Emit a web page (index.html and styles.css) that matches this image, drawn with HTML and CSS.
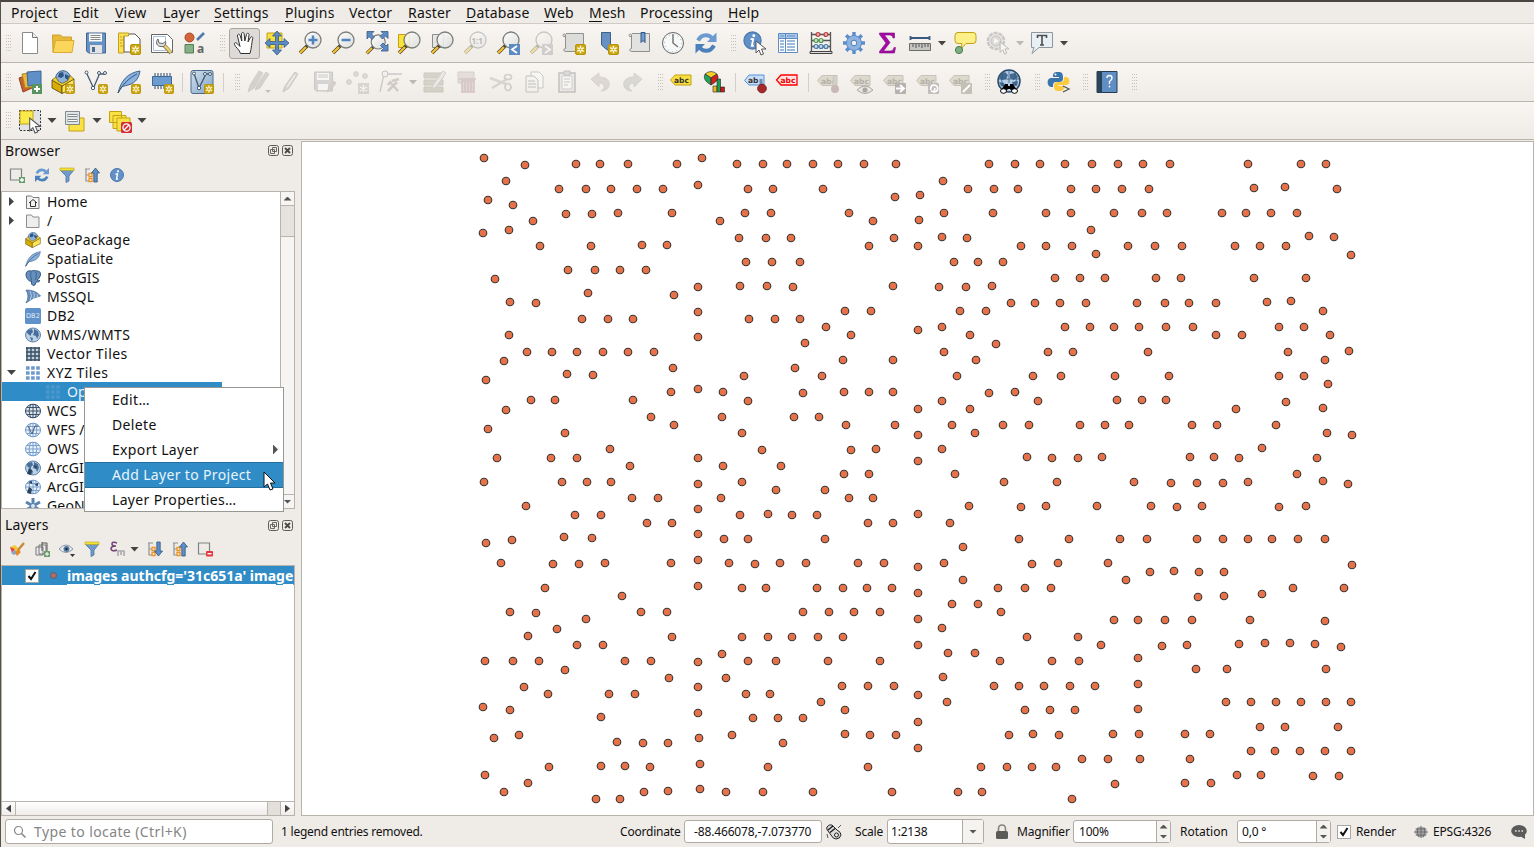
FILE: index.html
```html
<!DOCTYPE html>
<html lang="en">
<head>
<meta charset="utf-8">
<title>QGIS</title>
<link rel="stylesheet" href="styles.css">
</head>
<body>
<svg class="defs" width="0" height="0">
  <defs>
    <linearGradient id="glass" x1="0" y1="0" x2="1" y2="1"><stop offset="0" stop-color="#fff"/><stop offset="1" stop-color="#d9dbd8"/></linearGradient>
    <linearGradient id="blueglass" x1="0" y1="0" x2="1" y2="1"><stop offset="0" stop-color="#d4e1ee"/><stop offset="1" stop-color="#7fa3c8"/></linearGradient>
    <symbol id="star" viewBox="0 0 11 11"><rect x=".5" y=".5" width="10" height="10" rx="1.5" fill="#cba610" stroke="#b8940a"/><path d="M5.5 1.700v7.600M2.200 3.600l6.600 3.800M8.800 3.600L2.200 7.400" stroke="#fffbe6" stroke-width="1.500"/><circle cx="5.500" cy="5.500" r="1" fill="#cba610"/></symbol>
    <symbol id="lens" viewBox="0 0 24 24"><path d="M2 22l8-8" stroke="#3b3b33" stroke-width="3.600"/><path d="M2 22l6-6" stroke="#f5c02c" stroke-width="2.400"/><circle cx="15" cy="9" r="8" fill="url(#glass)" fill-opacity=".88" stroke="#7b7d7a" stroke-width="1.300"/></symbol>
    <symbol id="refresh" viewBox="0 0 24 24"><path d="M4 9.500Q7 4 12 4.200q4 .2 6 3" fill="none" stroke="#6b9bd2" stroke-width="4"/><path d="M22.500 1.500v9.500h-9.500z" fill="#6b9bd2"/><path d="M20 14.500Q17 20 12 19.800q-4-.2-6-3" fill="none" stroke="#4b80bd" stroke-width="4"/><path d="M1.500 22.500V13H11z" fill="#4b80bd"/></symbol>
    <symbol id="arrow" viewBox="0 0 12 16"><path d="M1 1v12l3-3 2 5 2.500-1-2-5H11z" fill="#fff" stroke="#555" stroke-width="1"/></symbol>
    <symbol id="info" viewBox="0 0 16 16"><circle cx="8" cy="8" r="6.500" fill="#6290c8" stroke="#4b78ae"/><circle cx="9" cy="4.300" r="1.100" fill="#fff"/><path d="M6.500 7h2l-1 5h1.500" fill="none" stroke="#fff" stroke-width="1.400"/></symbol>
    <symbol id="globe" viewBox="0 0 16 16"><ellipse cx="8" cy="8" rx="7.500" ry="7" fill="#bcd0e6" stroke="#5c83ad"/><path d="M3 3l4-1 1 3-2 2v2L3 7 1.500 5zM9 2l4 2 1 4-2 4-1-3-3-1 1-3zM5 10l3 1-1 4z" fill="#486f9c"/></symbol>
    <symbol id="gridglobe" viewBox="0 0 16 16"><ellipse cx="8" cy="8" rx="7.500" ry="6.800" fill="currentColor" fill-opacity=".15" stroke="currentColor"/><path d="M.5 8h15M2 4.500h12M2 11.500h12M8 1v14M5.500 1.500q-3 6.500 0 13M10.500 1.500q3 6.500 0 13" fill="none" stroke="currentColor" stroke-width=".9"/></symbol>
    <symbol id="box" viewBox="0 0 24 24"><circle cx="12" cy="8" r="7.300" fill="#8db2db" stroke="#3f668f"/><path d="M8 3l4-1 1 4-3 2-3-1zM14 4l4 2-1 4-3-2z" fill="#2e5584"/><path d="M1 10l10 6v7.500L1 18z" fill="#d9ad00" stroke="#4e4216" stroke-width=".8"/><path d="M23 9l-12 7v7.500l12-6z" fill="#ffe552" stroke="#4e4216" stroke-width=".8"/><path d="M1 10l4-3 2 4 4 2.500 6-3 2-5 4 3.500-12 7z" fill="#f2cf2b" stroke="#4e4216" stroke-width=".6"/></symbol>
    <symbol id="feather" viewBox="0 0 24 24"><path d="M1 23c3-12 9-20 22-22-1 5-3 12-12 14-3 1-6 1-7 3z" fill="#8bb2de" stroke="#3f6690"/><path d="M1 23C6 14 12 8 20 4" fill="none" stroke="#31577f"/></symbol>
    <symbol id="tiles" viewBox="0 0 16 16"><path d="M1 3h14M1 8h14M1 13h14" stroke="currentColor" stroke-width="3.600" stroke-dasharray="3.600 1.500"/></symbol>
    <symbol id="funnel" viewBox="0 0 16 16"><path d="M1 3h14L10 9v5l-3 1.500V9z" fill="#6f9bcb" stroke="#4b76a6" stroke-width=".8"/><path d="M1 1h14v2.500H1z" fill="#f4e13b" stroke="#b6a51e" stroke-width=".6"/></symbol>
    <symbol id="treeup" viewBox="0 0 16 16"><path d="M1 2h5M2 2v12h4M2 8h3" fill="none" stroke="#8e9394" stroke-width="1.200"/><path d="M5 6.500h3v3H5zM5 11.500h3v3H5z" fill="#fff" stroke="#ee9224" stroke-width="1.300"/><path d="M11.500 1l4 5h-2.300v9H9.800V6H7.500z" fill="#5d8fc9" stroke="#30557f" stroke-width=".8"/></symbol>
    <symbol id="treedown" viewBox="0 0 16 16"><path d="M1 2h5M2 2v12h4M2 8h3" fill="none" stroke="#8e9394" stroke-width="1.200"/><path d="M5 6.500h3v3H5zM5 11.500h3v3H5z" fill="#fff" stroke="#ee9224" stroke-width="1.300"/><path d="M11.500 15l4-5h-2.300V1H9.800v9H7.500z" fill="#5d8fc9" stroke="#30557f" stroke-width=".8"/></symbol>
    <symbol id="float" viewBox="0 0 11 11"><rect x=".5" y=".5" width="10" height="10" rx="2" fill="none" stroke="#5e5b57"/><path d="M4.500 2.500h4v4h-4zM2.500 4.500h4v4h-4z" fill="#efebe7" stroke="#5e5b57" stroke-width=".9"/></symbol>
    <symbol id="close" viewBox="0 0 11 11"><rect x=".5" y=".5" width="10" height="10" rx="2" fill="none" stroke="#5e5b57"/><path d="M3 3l5 5M8 3L3 8" stroke="#4c4945" stroke-width="1.800"/></symbol>
    <symbol id="tag" viewBox="0 0 24 24"><path d="M1.500 11l4.500-5h16v10H6z" fill="#f8df3d" stroke="#c3a014"/><text x="5" y="14" class="tagtext" fill="#333">abc</text></symbol>
    <symbol id="graytag" viewBox="0 0 24 24"><path d="M1.500 10.500l4.500-5h15v10H6z" fill="#dddacd" stroke="#c6c3b8"/><text x="5" y="13.500" class="tagtext" fill="#b3b0a8">abc</text></symbol>
  </defs>
</svg>

<div class="window">
  <nav class="menubar">
    <span>Pro<u>j</u>ect</span><span><u>E</u>dit</span><span><u>V</u>iew</span><span><u>L</u>ayer</span><span><u>S</u>ettings</span><span><u>P</u>lugins</span><span>Vect<u>o</u>r</span><span><u>R</u>aster</span><span><u>D</u>atabase</span><span><u>W</u>eb</span><span><u>M</u>esh</span><span>Pro<u>c</u>essing</span><span><u>H</u>elp</span>
  </nav>

  <div class="toolbar">
    <i class="grip first"></i>
    <b class="tool"><svg viewBox="0 0 24 24"><path d="M4.500 1.500h10l5 5v16h-15z" fill="#fff" stroke="#8b8b89"/><path d="M14.500 1.500v5h5" fill="#eee" stroke="#777"/></svg></b>
    <b class="tool"><svg viewBox="0 0 24 24"><path d="M1.500 4h8l2 2h9v4H5L2 21z" fill="#e9b93a" stroke="#d0a02a"/><path d="M4.500 9.500h18.500l-2 12H2z" fill="#fbd65b" stroke="#d9aa37"/></svg></b>
    <b class="tool"><svg viewBox="0 0 24 24"><path d="M2.500 2h19v20h-17l-2-2z" fill="#6691c5" stroke="#44668f"/><path d="M5 2.500h13v8H5z" fill="#fafafa"/><path d="M6.500 4.500h10M6.500 6.500h10M6.500 8.500h10" stroke="#888"/><path d="M6 14h12v8H6z" fill="#e3e3e3"/><path d="M8 16h3v5H8z" fill="#4a6c96"/></svg></b>
    <b class="tool"><svg viewBox="0 0 24 24"><path d="M7 3h11l5 5v13H7z" fill="#fff" stroke="#555"/><path d="M1.500 2h10v3h-5v17h-5z" fill="#fbe05b" stroke="#c5a013"/><path d="M3 6h2M3 9h3M3 12h2M3 15h3" stroke="#c5a013"/><use href="#star" x="13" y="13" width="11" height="11"/></svg></b>
    <b class="tool"><svg viewBox="0 0 24 24"><path d="M1.500 3.500h16l5 5v13h-21z" fill="#fff" stroke="#666"/><path d="M3.500 5.500h12v14h-12z" fill="none" stroke="#a9bede"/><path d="M13 13l8 9" stroke="#8a7c3d" stroke-width="4"/><path d="M13 13l8 8.500" stroke="#e9d37a" stroke-width="2.500"/><path d="M8 8l1 4 4 .5 2.500-2c1 3-1.500 6-4.500 5-4 0-6-4-3-7.500z" fill="#ddd" stroke="#555" stroke-width=".9"/></svg></b>
    <b class="tool"><svg viewBox="0 0 24 24"><circle cx="6.500" cy="6.500" r="4.500" fill="#d3643b" stroke="#a44a27"/><path d="M14 9l7-7" stroke="#4f7bb0" stroke-width="2.600"/><path d="M2 13.500h8.500v8.500H2z" fill="#86b086" stroke="#577d58"/><text x="14" y="22" class="glyph-a">a</text></svg></b>
    <i class="grip"></i>
    <b class="tool pressed"><svg viewBox="0 0 24 24"><path d="M8.500 22.500c-1-4-5-6-6-9-.5-2 1.500-2.500 3-.5L8 15.500 5.500 5c-.4-2 2-2.500 2.600-.5L9.800 10 9.500 3c0-2 2.500-2 2.700 0l.6 7L14.500 3.500c.5-2 2.800-1.500 2.500.5L16 11l2.500-4.500c1-1.500 2.800-.5 2.200 1-1 4-1.200 10-2.700 15z" fill="#fff" stroke="#333"/></svg></b>
    <b class="tool"><svg viewBox="0 0 24 24"><path d="M2 2h15v15H2z" fill="#f9df3d" stroke="#c3a014"/><path d="M12 0l4.500 5H13.500v5.500h5.500V7.500L24 12l-5 4.500v-3h-5.500V19h3L12 24l-4.500-5h3v-5.500H5v3L0 12l5-4.500v3h5.500V5h-3z" fill="#5b8bc2" stroke="#365c87" stroke-width=".8"/></svg></b>
    <b class="tool"><svg viewBox="0 0 24 24"><use href="#lens"/><path d="M15 4.500v9M10.500 9h9" stroke="#4f82be" stroke-width="2.500"/></svg></b>
    <b class="tool"><svg viewBox="0 0 24 24"><use href="#lens"/><path d="M10.500 9h9" stroke="#4f82be" stroke-width="2.500"/></svg></b>
    <b class="tool"><svg viewBox="0 0 24 24"><g transform="translate(1 3) scale(.88)"><use href="#lens" width="24" height="24"/></g><path d="M3 .5h7L7.500 3l3 3-2.500 2.500-3-3L3 8zM24 .5v7L21.500 5l-3 3L16 5.500l3-3L17 .5zM24 20h-7l2.500-2.500-3-3L19 12l3 3 2-2z" fill="#5b8bc2" stroke="#365c87" stroke-width=".8"/></svg></b>
    <b class="tool"><svg viewBox="0 0 24 24"><path d="M1.500 3.500h11v13h-11z" fill="#fbe43a" stroke="#c3a014"/><use href="#lens"/></svg></b>
    <b class="tool"><svg viewBox="0 0 24 24"><path d="M2.500 3.500h11v13h-11z" fill="#e6e6e4" stroke="#8b8d8b"/><use href="#lens"/></svg></b>
    <b class="tool off"><svg viewBox="0 0 24 24"><use href="#lens"/><text x="8.500" y="12.500" class="one">1:1</text></svg></b>
    <b class="tool"><svg viewBox="0 0 24 24"><use href="#lens"/><path d="M13 13h11v11H13z" fill="#5b8bc2"/><path d="M21 15l-5 3.500 5 3.500" fill="none" stroke="#fff" stroke-width="1.800"/></svg></b>
    <b class="tool off"><svg viewBox="0 0 24 24"><use href="#lens"/><path d="M13 13h11v11H13z" fill="#999"/><path d="M16 15l5 3.500-5 3.500" fill="none" stroke="#fff" stroke-width="1.800"/></svg></b>
    <b class="tool"><svg viewBox="0 0 24 24"><path d="M4 2.500h17.500v18H4c-3 0-3-3-.5-3V3.500c-2-2-3 1-2 2h2" fill="#dcdcda" stroke="#90918f"/><use href="#star" x="13" y="13" width="11" height="11"/></svg></b>
    <b class="tool"><svg viewBox="0 0 24 24"><path d="M6.500 1.500h9v19L11 18l-4.500-4z" fill="#668fc2" stroke="#405f85"/><use href="#star" x="13" y="13" width="11" height="11"/></svg></b>
    <b class="tool"><svg viewBox="0 0 24 24"><path d="M4 2.500h17.500v18H4c-3 0-3-3-.5-3V3.500c-2-2-3 1-2 2h2" fill="#e2e2e0" stroke="#90918f"/><path d="M13 1.500h4v10l-2-2-2 2z" fill="#6f9bd0" stroke="#30557f"/></svg></b>
    <b class="tool"><svg viewBox="0 0 24 24"><circle cx="12" cy="12" r="10.500" fill="#f7f8f8" stroke="#666"/><path d="M12 3v9l5 4" fill="none" stroke="#777" stroke-width="1.500"/><circle cx="12" cy="12" r="8.500" fill="none" stroke="#9aabbc" stroke-dasharray="1 3.450"/></svg></b>
    <b class="tool"><svg viewBox="0 0 24 24"><use href="#refresh"/></svg></b>
    <i class="grip"></i>
    <b class="tool"><svg viewBox="0 0 24 24"><use href="#info" x="-1" y="-1" width="21" height="21"/><use href="#arrow" x="12" y="9" width="12" height="16"/></svg></b>
    <b class="tool"><svg viewBox="0 0 24 24"><path d="M2.500 2.500h19v19h-19z" fill="#fff" stroke="#5e8cc0"/><path d="M3 3h18v4H3z" fill="#a9c7e8"/><path d="M3 7.500h18M9.500 3v18" stroke="#5e8cc0"/><path d="M4 5h4M11 5h8M4 10h4M11 10h8M4 13h4M11 13h8M4 16h4M11 16h8M4 19h4M11 19h8" stroke="#7da3cf" stroke-width="1.300"/></svg></b>
    <b class="tool"><svg viewBox="0 0 24 24"><path d="M2.500 1v21M21.500 1v21M2 3.500h20M2 9.500h20M2 15.500h20" fill="none" stroke="#555" stroke-width="1.300"/><path d="M1 20.500h22v2H1z" fill="#ddd" stroke="#444"/><g stroke-width="1.200"><g fill="#f3a8a8" stroke="#b13c3c"><circle cx="9" cy="3.500" r="2"/><circle cx="17" cy="3.500" r="2"/></g><g fill="#c3e6c3" stroke="#56975a"><circle cx="7" cy="9.500" r="2"/><circle cx="12" cy="9.500" r="2"/></g><g fill="#c5dcf1" stroke="#4a7aa8"><circle cx="7" cy="15.500" r="2"/><circle cx="12" cy="15.500" r="2"/><circle cx="17" cy="15.500" r="2"/></g></g></svg></b>
    <b class="tool"><svg viewBox="0 0 24 24"><path d="M12 1v22M1 12h22M4.200 4.200l15.600 15.600M19.800 4.200L4.200 19.800" stroke="#5b8dca" stroke-width="3.400"/><circle cx="12" cy="12" r="7.500" fill="#8fb3e0" stroke="#5b8dca"/><circle cx="12" cy="12" r="2.800" fill="#f1f2f2" stroke="#4b7db9"/></svg></b>
    <b class="tool"><svg viewBox="0 0 24 24"><path d="M4.500 2h15v5h-1.500q-.5-3-3-3H9.500l5.500 7.500-6.500 8.500h7q3 0 3.500-3.500H20.500L19.500 22H4.500v-1.500l6.500-8.500-6.500-8.500z" fill="#a50ca5" stroke="#7f087f" stroke-width=".6"/></svg></b>
    <b class="tool"><svg viewBox="0 0 24 24"><path d="M2 7h20M2.500 5v4M21.500 5v4" stroke="#39597f" stroke-width="1.800"/><path d="M1.500 12.500h21v7h-21z" fill="#c5c5c2" stroke="#6d6d6a"/><path d="M5 13v3M8 13v4M11 13v3M14 13v4M17 13v3M20 13v3" stroke="#555"/></svg></b>
    <i class="drop"></i>
    <b class="tool"><svg viewBox="0 0 24 24"><path d="M4 1.500h16q3 0 3 3v5q0 3-3 3h-7L8 18l1-5.500H5q-3 0-3-3v-5q0-3 3-3z" fill="#fdf089" stroke="#c3a014"/><circle cx="6" cy="19" r="3.600" fill="#7cae80" stroke="#4b7a50"/></svg></b>
    <b class="tool off"><svg viewBox="0 0 24 24"><circle cx="10" cy="10" r="8" fill="#ddd" stroke="#888" stroke-width="2.600" stroke-dasharray="4 1"/><circle cx="10" cy="10" r="5" fill="#bbb" stroke="#777"/><path d="M8 7l5 3-5 3z" fill="#fff"/><use href="#arrow" x="13" y="10" width="11" height="14"/></svg></b>
    <i class="drop dim"></i>
    <b class="tool"><svg viewBox="0 0 24 24"><path d="M1.500 1.500h21v15H9l-7 6 2-6H1.500z" fill="#e9f0f5" stroke="#8f979c"/><path d="M7.500 7V4.500h9V7M12 4.500V14M10 14h4" fill="none" stroke="#4d4d4d" stroke-width="1.600"/></svg></b>
    <i class="drop"></i>
  </div>

  <div class="toolbar">
    <i class="grip first"></i>
    <b class="tool"><svg viewBox="0 0 24 24"><path d="M1 8l9-3 4 13-9 4z" fill="#c9602f" stroke="#8f421d"/><path d="M4 4l10-1 2 14-9 1z" fill="#e7b93c" stroke="#b0841a"/><path d="M9 2l14-1v14l-13 1z" fill="#5f8fc9" stroke="#3d6691"/><path d="M14 14h10v10H14z" fill="#59935f"/><path d="M19 16v6M16 19h6" stroke="#fff" stroke-width="2"/></svg></b>
    <b class="tool"><svg viewBox="0 0 24 24"><use href="#box"/><use href="#star" x="14" y="14" width="10" height="10"/></svg></b>
    <b class="tool"><svg viewBox="0 0 24 24"><path d="M2.500 3l7 15 6-14h6" fill="none" stroke="#425a70" stroke-width="1.300"/><g fill="#fff" stroke="#425a70"><circle cx="2.500" cy="2.500" r="1.500"/><circle cx="9" cy="18" r="1.700"/><circle cx="15" cy="3" r="1.500"/><circle cx="21" cy="3" r="1.500"/></g><use href="#star" x="14" y="14" width="10" height="10"/></svg></b>
    <b class="tool"><svg viewBox="0 0 24 24"><use href="#feather"/><use href="#star" x="14" y="14" width="10" height="10"/></svg></b>
    <b class="tool"><svg viewBox="0 0 24 24"><path d="M5 3v16M8 3v16M11 3v16M14 3v16M17 3v16M20 3v16" stroke="#4b657f" stroke-width="1.200"/><path d="M2.500 6.500h19v9h-19z" fill="#6b9bd0" stroke="#3f6893"/><use href="#star" x="14" y="14" width="10" height="10"/></svg></b>
    <i class="sep"></i>
    <b class="tool"><svg viewBox="0 0 24 24"><rect x="1" y=".500" width="22" height="23" rx="2" fill="url(#blueglass)" stroke="#4c6c8e"/><path d="M4 3.500l5 14.500 7-14h5" fill="none" stroke="#425a70" stroke-width="1.300"/><g fill="#fff" stroke="#425a70"><circle cx="4" cy="3.500" r="1.500"/><circle cx="9" cy="18" r="1.700"/><circle cx="15" cy="4" r="1.500"/><circle cx="20" cy="4" r="1.500"/></g><use href="#star" x="14" y="14" width="10" height="10"/></svg></b>
    <i class="sep s2"></i>
    <i class="grip"></i>
    <b class="tool off"><svg viewBox="0 0 24 24"><path d="M1 22l2-7L12 1l4 2-9 15zM8 20l2-5 9-13 3 2-9 14z" fill="#a49c96" stroke="#999"/><path d="M18 20h6l-3 3z" fill="#777"/></svg></b>
    <b class="tool off"><svg viewBox="0 0 24 24"><path d="M3 22l2-6L15 2l3 2-9 14z" fill="#b5b2a5" stroke="#85837b"/><path d="M7 17l8-12" stroke="#fff"/></svg></b>
    <b class="tool off"><svg viewBox="0 0 24 24"><path d="M1.500 2h18v19H3l-1.500-2z" fill="#aaa" stroke="#888"/><path d="M4 3h12v7H4zM5 14h10v6H5z" fill="#fff"/><path d="M5 5h10M5 7h10" stroke="#888"/><path d="M14 22l2-5 5-6 2 2-6 8z" fill="#b5938d" stroke="#999"/></svg></b>
    <b class="tool off"><svg viewBox="0 0 24 24"><g fill="#bbb" stroke="#888"><circle cx="3" cy="12" r="2.300"/><circle cx="10" cy="4" r="2.300"/><circle cx="19" cy="6" r="2.300"/></g><path d="M12 13h11v11H12z" fill="#aaa"/><path d="M17.500 15v7M14 17l7 4M21 17l-7 4" stroke="#fff" stroke-width="1.300"/></svg></b>
    <b class="tool off"><svg viewBox="0 0 24 24"><path d="M1 22L5 4h18" fill="none" stroke="#888" stroke-width="1.300"/><circle cx="6" cy="4" r="3" fill="#eee" stroke="#777"/><path d="M9 21l9-9M11 12l8 9M13 11l7-2M9 15l3-4" stroke="#999284" stroke-width="2.500"/></svg></b>
    <i class="drop dim"></i>
    <b class="tool off"><svg viewBox="0 0 24 24"><path d="M1 3h19v5H1zM1 10h19v5H1zM1 17h19v5H1z" fill="#a5a38c" stroke="#8b8978"/><path d="M9 19l1-4L20 1l3 2-10 14z" fill="#ddd" stroke="#999"/></svg></b>
    <b class="tool off"><svg viewBox="0 0 24 24"><path d="M2 2h16v11H2z" fill="#ccbcb7" stroke="#999"/><path d="M3 9h17M6 11h12v11H6z" fill="#cbb0b0" stroke="#a37d7d" stroke-width="1.500"/><path d="M9 12v9M12 12v9M15 12v9" stroke="#8f6d6d"/></svg></b>
    <b class="tool off"><svg viewBox="0 0 24 24"><path d="M1 8l16 6M3 18l15-9" stroke="#aaa" stroke-width="2.500"/><g fill="none" stroke="#999" stroke-width="1.700"><ellipse cx="19" cy="7" rx="3.500" ry="2.500"/><ellipse cx="19" cy="17" rx="3" ry="3.500"/></g></svg></b>
    <b class="tool off"><svg viewBox="0 0 24 24"><path d="M9 2h8l4 4v12H9z" fill="#fff" stroke="#888"/><path d="M4 6h8l4 4v12H4z" fill="#f4f4f2" stroke="#777"/><path d="M6 11h7M6 14h8M6 17h8" stroke="#777"/></svg></b>
    <b class="tool off"><svg viewBox="0 0 24 24"><path d="M4 3h16v19H4z" fill="#ddd" stroke="#777" stroke-width="1.500"/><path d="M7 6h10v13H7z" fill="#fff" stroke="#999"/><path d="M9 1h6v4H9z" fill="#bbb" stroke="#777"/><path d="M9 9h6M9 12h6M9 15h4" stroke="#888"/></svg></b>
    <b class="tool off"><svg viewBox="0 0 24 24"><path d="M3 9l8-6v4c9 0 11 5 10 9-1 3-4 5-8 5 4-2 5-8-2-8v4z" fill="#b8b0a9" stroke="#aaa19a"/></svg></b>
    <b class="tool off"><svg viewBox="0 0 24 24"><path d="M21 9l-8-6v4C4 7 2 12 3 16c1 3 4 5 8 5-4-2-5-8 2-8v4z" fill="#aeb2aa" stroke="#9fa49b"/></svg></b>
    <i class="grip"></i>
    <b class="tool"><svg viewBox="0 0 24 24"><use href="#tag" x="-1" y="-1" width="24" height="24"/></svg></b>
    <b class="tool"><svg viewBox="0 0 24 24"><g stroke="#222" stroke-width=".6"><path d="M8 8L2 4q6-5 12 0z" fill="#f6cc29"/><path d="M8 8L2 4q-3 6 6 11z" fill="#21a453"/><path d="M8 8l6-4q4 6-6 11z" fill="#d32020"/><path d="M10 16h4v6h-4z" fill="#f4b61b"/><path d="M14 9h3.500v13H14z" fill="#1d9c50"/><path d="M17.500 17h4v5h-4z" fill="#cf1919"/></g></svg></b>
    <i class="sep"></i>
    <b class="tool"><svg viewBox="0 0 24 24"><path d="M1.500 10.500L6 5h15v10H6z" fill="#c8def7" stroke="#4e93df"/><text x="5" y="13" class="tagtext" fill="#333">ab</text><path d="M18 9v8" stroke="#718da8" stroke-width="3"/><circle cx="19" cy="18.500" r="4.300" fill="#a8292b" stroke="#771b1d"/></svg></b>
    <b class="tool"><svg viewBox="0 0 24 24"><path d="M.500 10L5 5h16v10H5z" fill="#ffe3e3" stroke="#f00" stroke-width="1.300"/><text x="4.500" y="13" class="tagtext" fill="#e00">abc</text></svg></b>
    <i class="sep"></i>
    <b class="tool"><svg viewBox="0 0 24 24"><use href="#graytag"/><path d="M18 6v10" stroke="#d0cbc6" stroke-width="3"/><circle cx="19" cy="19" r="4" fill="#c8b9b6"/></svg></b>
    <b class="tool"><svg viewBox="0 0 24 24"><use href="#graytag"/><path d="M8 20q8-8 16 0-8 7-16 0z" fill="#e9e7e3" stroke="#aaa7a1"/><circle cx="16" cy="20" r="2.500" fill="#aaa7a1"/></svg></b>
    <b class="tool"><svg viewBox="0 0 24 24"><use href="#graytag"/><rect x="13" y="13" width="11" height="11" rx="1" fill="#b4b2ae"/><path d="M14 18.500h7M18 15l4 3.500-4 3.500" fill="none" stroke="#fff" stroke-width="2"/></svg></b>
    <b class="tool"><svg viewBox="0 0 24 24"><use href="#graytag"/><rect x="13" y="13" width="11" height="11" rx="1" fill="#c0beba"/><path d="M16 20a3.500 3.500 0 1 1 3 2M20 18l-1 4-3-1" fill="none" stroke="#fff" stroke-width="1.700"/></svg></b>
    <b class="tool"><svg viewBox="0 0 24 24"><use href="#graytag"/><rect x="13" y="13" width="11" height="11" rx="1" fill="#c3c0b6"/><path d="M15 22l7-7" stroke="#fff" stroke-width="2"/></svg></b>
    <i class="grip"></i>
    <b class="tool"><svg viewBox="0 0 24 24"><circle cx="12" cy="11" r="11" fill="#b4cce6" stroke="#284a6c" stroke-width="1.500"/><path d="M3 5l5-3 3 3-2 4-4 1-3-2zM13 4l5-1 3 4-4 3-4-2zM2 12l5 1 1 4-4-1zM15 12l6-1-1 5-4-1z" fill="#42698f"/><path d="M1.500 9h21M12 0v13M6 2q-3 8 0 14M18 2q3 8 0 14" fill="none" stroke="#36597d" stroke-width=".8"/><path d="M4 20l4-6h3v2h2v-2h3l4 6-3 3-4-4h-2l-4 4z" fill="#000"/><ellipse cx="6.500" cy="21" rx="3" ry="2.300" fill="#fff" stroke="#000"/><ellipse cx="17.500" cy="21" rx="3" ry="2.300" fill="#fff" stroke="#000"/></svg></b>
    <i class="grip wide"></i>
    <b class="tool"><svg viewBox="0 0 24 24"><path d="M11 2c-5 0-5 2-5 5h6v1H4c-5 0-4 9 0 9h2c0-5 1-5 5-5 4 0 5-1 5-4 0-5-1-6-5-6z" fill="#3b75a9"/><path d="M12 21c5 0 5-2 5-5h-6v-1h8c5 0 4-8 0-8h-2c0 5-1 5-5 5-4 0-5 1-5 4 0 4 1 5 5 5z" fill="#fdcb3d"/><circle cx="8.500" cy="4.500" r="1" fill="#fff"/><path d="M16 16l6 3-6 3" fill="none" stroke="#555" stroke-width="1.300"/></svg></b>
    <i class="grip narrow"></i>
    <b class="tool"><svg viewBox="0 0 24 24"><path d="M2 1.500h20v21H2z" fill="#5f8ec4" stroke="#263d50"/><path d="M2 1.500h5v21H2z" fill="#2b4356"/><path d="M12 8q0-2.500 2.500-2.500T17 8q0 2-2.500 3.500V14" fill="none" stroke="#fff" stroke-width="1.400"/><circle cx="14.500" cy="16.500" r=".9" fill="#fff"/></svg></b>
    <i class="grip"></i>
  </div>

  <div class="toolbar last">
    <i class="grip first"></i>
    <b class="tool"><svg viewBox="0 0 24 24"><path d="M1.500 1.500h21v20h-21z" fill="#dfe3e6" stroke="#333" stroke-dasharray="2 1.500"/><path d="M2 2h13v13H2z" fill="#fce94a" stroke="#c3a014"/><g transform="translate(10 8)"><use href="#arrow" width="14" height="17"/></g></svg></b><i class="drop"></i>
    <b class="tool"><svg viewBox="0 0 24 24"><path d="M6 9h15v13H6z" fill="#fbe244" stroke="#c3a014"/><path d="M2.500 2.500h14v13h-14z" fill="#dfe4e8" stroke="#84898c"/><path d="M4.500 6.500h10M4.500 11.500h10" stroke="#84898c" stroke-width="3"/><path d="M5 6.500h9M5 11.500h9" stroke="#fff" stroke-width="1.200"/></svg></b><i class="drop"></i>
    <b class="tool"><svg viewBox="0 0 24 24"><path d="M1.500 2.500h12v11h-12zM5 6.500h13v13H5z" fill="#fbe244" stroke="#c3a014"/><path d="M9 9h13v13H9z" fill="#fbe244" stroke="#c3a014"/><rect x="13" y="13" width="11" height="11" rx="1.500" fill="#d32d35"/><circle cx="18.500" cy="18.500" r="3.600" fill="none" stroke="#fff" stroke-width="1.300"/><path d="M16 21l5-5" stroke="#fff" stroke-width="1.300"/></svg></b><i class="drop"></i>
  </div>

  <main class="workspace">
    <aside class="docks">
      <header class="dock-title"><span>Browser</span><svg><use href="#float"/></svg><svg><use href="#close"/></svg></header>
      <div class="dock-tools">
        <svg viewBox="0 0 16 16"><path d="M1.500 2h11v11h-11z" fill="none" stroke="#7e8584" stroke-width="1.200"/><path d="M10 10h6v6h-6z" fill="#6a9c6c"/><path d="M13 11v4M11 13h4" stroke="#fff" stroke-width="1.300"/></svg>
        <svg><use href="#refresh"/></svg><svg><use href="#funnel"/></svg><svg><use href="#treeup"/></svg><svg><use href="#info"/></svg>
      </div>
      <section class="browser-tree">
        <ul class="tree">
          <li><i class="exp"></i><svg viewBox="0 0 16 16"><path d="M1.500 3V2h5l1.500 1.500h6v11h-12.500z" fill="#f1f2f1" stroke="#777a78"/><path d="M4 9l4-3.500L12 9M5.500 8v4.500h5V8" fill="none" stroke="#333"/></svg><span>Home</span></li>
          <li><i class="exp"></i><svg viewBox="0 0 16 16"><path d="M1.500 2h5l1.500 2h6v10.500H1.500z" fill="#edeeed" stroke="#8b8e8c"/></svg><span>/</span></li>
          <li><i></i><svg><use href="#box"/></svg><span>GeoPackage</span></li>
          <li><i></i><svg><use href="#feather"/></svg><span>SpatiaLite</span></li>
          <li><i></i><svg viewBox="0 0 16 16"><path d="M1 5q0-5 5-4 4-1 6 0 4 0 3.500 4-1 4-3.500 5 1 1 3 .5-1 2-4 1.500-.5 4-3 3.500Q6 15 6.500 11q-2 1-3-1Q1 8 1 5z" fill="#678fbd" stroke="#335a84"/><path d="M6 2q-1 4 .5 8M11 2q1 4-.5 8" fill="none" stroke="#335a84" stroke-width=".8"/></svg><span>PostGIS</span></li>
          <li><i></i><svg viewBox="0 0 16 16"><path d="M1 1q10 0 14.500 6Q8 8 1 14q4-7 0-13z" fill="#668fbd" stroke="#3b638f" stroke-width=".7"/><path d="M5 2q3 5 0 9M8.500 3q2 4 0 6.500M12 5q1 2 0 3" fill="none" stroke="#c9d9ea" stroke-width=".8"/></svg><span>MSSQL</span></li>
          <li><i></i><svg viewBox="0 0 16 16"><rect width="16" height="16" rx="1.500" fill="#5f92cb"/><text x="8" y="10" class="db2">DB2</text></svg><span>DB2</span></li>
          <li><i></i><svg><use href="#globe"/></svg><span class="loose">WMS/WMTS</span></li>
          <li><i></i><svg viewBox="0 0 16 16"><path d="M1 2h14v12H1z" fill="#c6d0da"/><path d="M1 2h14M1 6h14M1 10h14M1 14h14M2 1v14M6 1v14M10 1v14M14 1v14" stroke="#374e66" stroke-width="1.400"/></svg><span class="loose">Vector Tiles</span></li>
          <li><i class="exp open"></i><svg class="blue"><use href="#tiles"/></svg><span class="loose">XYZ Tiles</span></li>
          <li class="selected"><svg><use href="#tiles"/></svg><span>Op</span></li>
          <li><i></i><svg class="navy"><use href="#gridglobe"/></svg><span>WCS</span></li>
          <li><i></i><svg class="blue" viewBox="0 0 16 16"><use href="#gridglobe"/><path d="M3 4l4 8 3-8h3" fill="none" stroke="#4c5f72"/></svg><span>WFS /</span></li>
          <li><i></i><svg class="blue"><use href="#gridglobe"/></svg><span>OWS</span></li>
          <li><i></i><svg viewBox="0 0 16 16"><use href="#globe"/><path d="M2 14l2-6 3 2-1 5zM8 5l4 1-1 3z" fill="#29435f"/></svg><span>ArcGI</span></li>
          <li><i></i><svg viewBox="0 0 16 16"><use href="#gridglobe" class="blue"/><path d="M2 14l2-6 3 2-1 5zM3 3l4-1v3zM9 6l4-2v3z" fill="#29435f"/></svg><span>ArcGI</span></li>
          <li><i></i><svg viewBox="0 0 16 16"><path d="M8 0v16M1 4l14 8M15 4L1 12" stroke="#5a83af" stroke-width="3"/><circle cx="8" cy="8" r="2" fill="#d8e5f2"/></svg><span>GeoN</span></li>
        </ul>
        <div class="vscroll"><b class="up"></b><b class="thumb"></b><b class="rest"></b><b class="down"></b></div>
      </section>
      <header class="dock-title layers"><span>Layers</span><svg><use href="#float"/></svg><svg><use href="#close"/></svg></header>
      <div class="dock-tools second">
        <svg viewBox="0 0 16 16"><path d="M1 6l5-2 5 5-4 4z" fill="#f5c932"/><path d="M1 6l5 2-3 4z" fill="#e54a4a"/><path d="M2 12l4-3 2 3-3 2z" fill="#7ea7d4"/><path d="M6 12l3-4 3 3-4 4z" fill="#e88929"/><path d="M9 9l6-7" stroke="#c88935" stroke-width="2.400"/></svg>
        <svg viewBox="0 0 16 16"><path d="M2 6h7v8H2zM5 4h7v9H5z" fill="#eee" stroke="#777"/><path d="M8 1v9M8 2h5v8" fill="none" stroke="#555"/><path d="M10 10h6v6h-6z" fill="#6a9c6c"/><path d="M13 11v4M11 13h4" stroke="#fff"/></svg>
        <svg viewBox="0 0 16 16"><path d="M0 8q7-8 14 0-7 7-14 0z" fill="#e8eef3" stroke="#8a98a4"/><circle cx="7.500" cy="8" r="3" fill="#547ca8"/><circle cx="7.500" cy="8" r="1.200" fill="#222"/><path d="M11 13h5l-2.500 3z" fill="#333"/></svg>
        <svg><use href="#funnel"/></svg>
        <svg viewBox="0 0 16 16"><path d="M8 2Q3 0 3 3q0 2 4 2-5 0-5 3 1 3 6 1" fill="none" stroke="#754575" stroke-width="1.600"/><path d="M9 15v-5h6v5M12 10v4" fill="none" stroke="#a9aaac" stroke-width="1.600"/></svg><i class="drop"></i>
        <svg><use href="#treedown"/></svg><svg><use href="#treeup"/></svg>
        <svg viewBox="0 0 16 16"><path d="M1.500 2h11v11h-11z" fill="none" stroke="#7e8584" stroke-width="1.200"/><rect x="9" y="10" width="7" height="5.500" rx="1" fill="#e8363f"/><path d="M10.500 12.700h4" stroke="#fff" stroke-width="1.400"/></svg>
      </div>
      <section class="layer-tree">
        <div class="layer-row"><i class="check"><svg viewBox="0 0 12 12"><path d="M2.500 6l2.500 3 4.500-7" fill="none" stroke="#111" stroke-width="2"/></svg></i><i class="marker"></i><span>images authcfg='31c651a' image</span></div>
        <div class="hscroll"><b class="left"></b><b class="track"></b><b class="thumb"></b><b class="right"></b></div>
      </section>
    </aside>
    <div class="splitter"></div>
    <section class="map"><svg id="points"></svg></section>
  </main>

  <footer class="status">
    <div class="locator"><svg viewBox="0 0 14 14"><circle cx="5.500" cy="5.500" r="4" fill="none" stroke="#888" stroke-width="1.200"/><path d="M8.500 8.500l4 4" stroke="#888" stroke-width="1.600"/></svg><span>Type to locate (Ctrl+K)</span></div>
    <span class="message">1 legend entries removed.</span>
    <span class="coord-label">Coordinate</span>
    <div class="field coord">-88.466078,-7.073770</div>
    <svg class="mouse" viewBox="0 0 16 16"><path d="M1 3q2-3 5-2l5 5q4 2 4 5-1 4-5 4-3 0-5-4L2 7q-2-2-1-4z" fill="#ddd" stroke="#222"/><path d="M2 6l5-4M4 8.500l5-4" stroke="#222" stroke-width="1.500"/><path d="M1 10l1 4M12 4l3-3" stroke="#555"/><circle cx="10.500" cy="11" r="2" fill="#eee" stroke="#222"/></svg>
    <span class="scale-label">Scale</span>
    <div class="field combo"><span>1:2138</span><i><b class="tri-down"></b></i></div>
    <svg class="lock" viewBox="0 0 14 16"><path d="M3.500 8V5q0-4 3.500-4t3.500 4v3" fill="none" stroke="#858585" stroke-width="1.600"/><rect x="1" y="7" width="12" height="8" rx="1.500" fill="#5a5a58"/></svg>
    <span class="mag-label">Magnifier</span>
    <div class="field spin mag"><span>100%</span><i><b class="tri-up"></b><b class="tri-down"></b></i></div>
    <span class="rot-label">Rotation</span>
    <div class="field spin rot"><span>0,0 °</span><i><b class="tri-up"></b><b class="tri-down"></b></i></div>
    <i class="check"><svg viewBox="0 0 12 12"><path d="M2.500 6l2.500 3 4.500-7" fill="none" stroke="#111" stroke-width="2"/></svg></i>
    <span class="render-label">Render</span>
    <svg class="crs" viewBox="0 0 16 16"><path d="M1 8q0-3 3-5t8 0q3 2 3 5-1 5-5 6H7Q2 13 1 8z" fill="#aaa"/><path d="M0 8h16M2 4.500h12M2 11.500h12M8 1v14M4.500 3q-2 5 1 11M11.500 3q2 5-1 11" fill="none" stroke="#666"/></svg>
    <span class="epsg">EPSG:4326</span>
    <svg class="bubble" viewBox="0 0 16 16"><ellipse cx="8" cy="7" rx="7.800" ry="6" fill="#5a5a58"/><path d="M9 12l5-1v4z" fill="#5a5a58"/><path d="M4 7h1.700M7.200 7h1.700M10.400 7h1.700" stroke="#ddd" stroke-width="1.700"/></svg>
  </footer>

  <div class="context-menu">
    <div>Edit…</div><div>Delete</div><div>Export Layer<i></i></div><div class="active">Add Layer to Project</div><div>Layer Properties…</div>
  </div>
  <svg class="cursor" viewBox="0 0 12 20"><path d="M1 1v15l3.500-3 2.500 6 3-1-2.500-6H12z" fill="#fff" stroke="#111"/></svg>
</div>
<script src="points.js"></script>
</body>
</html>
```

FILE: styles.css
```css
* { box-sizing: border-box; }
body { margin: 0; background: #efebe7; color: #111; font: 14px "Noto Sans", "Open Sans", sans-serif; }
i, b { font-style: normal; font-weight: normal; display: block; flex: none; }
svg { display: block; flex: none; }
.defs { position: absolute; }
.window { position: relative; width: 1534px; height: 847px; overflow: hidden; display: flex; flex-direction: column; border-top: 2px solid #4b453f; border-left: 1px solid #57504b; }

.menubar { height: 22px; flex: none; display: grid; grid-template-columns: 62px 42px 48px 51px 71px 64px 59px 58px 78px 45px 51px 88px 60px; padding-left: 10px; line-height: 21px; letter-spacing: .18px; border-bottom: 1px solid #cfcac5; background: #efebe6; white-space: nowrap; }
.menubar u { text-underline-offset: 3px; text-decoration-thickness: 1px; }

.toolbar { height: 39px; flex: none; display: flex; align-items: center; padding-left: 3px; background: linear-gradient(#f8f5f2, #efece7); border-bottom: 1px solid #b9b4ae; }
.toolbar.last { height: 38px; }
.tool { width: 33px; height: 33px; display: flex; align-items: center; justify-content: center; }
.tool svg { width: 24px; height: 24px; overflow: visible; }
.tool.pressed { width: 31px; height: 31px; margin: 0 1px; border: 1px solid #aaa49f; border-radius: 3px; background: #dedad7; }
.tool.off { opacity: .38; }
.grip { width: 16px; height: 17px; background: radial-gradient(circle at .5px .5px, #c6c1bc .6px, transparent .9px) 0 0 / 2px 3px content-box; padding: 0 3px 0 8px; }
.grip.first { width: 9.5px; padding: 0 2.5px 0 2px; }
.grip.wide { width: 17px; padding-left: 9px; }
.grip.narrow { width: 15px; padding-left: 7px; }
.sep { width: 4px; height: 19px; border-right: 1px solid #d3cec9; margin-right: 3px; }
.sep.s2 { width: 5px; }
.drop { width: 12px; height: 5px; background: #444; clip-path: polygon(1px 0, 10px 0, 5.5px 5px); }
.drop.dim { background: #bcb9b5; width: 11px; }
.tagtext { font: bold 7.5px "DejaVu Sans", sans-serif; }
.glyph-a { font: bold 12px "Noto Sans", sans-serif; fill: #666; }
.one { font: bold 8px "Noto Sans", sans-serif; fill: #555; }
.db2 { font: 6.5px "DejaVu Sans", sans-serif; fill: #e5edf6; text-anchor: middle; }

.workspace { height: 676px; flex: none; display: flex; padding-top: 1px; }
.docks { width: 294px; flex: none; display: flex; flex-direction: column; }
.dock-title { height: 21px; flex: none; display: flex; align-items: center; gap: 3px; padding: 0 2px 2px 4px; letter-spacing: .15px; }
.dock-title span { flex: 1; line-height: 18px; }
.dock-title svg { width: 11px; height: 11px; }
.dock-title.layers { height: 29px; padding-top: 3px; padding-bottom: 0; }
.dock-tools { height: 29px; flex: none; display: flex; align-items: center; gap: 9px; padding: 0 0 4px 8px; }
.dock-tools svg { width: 16px; height: 16px; }
.dock-tools.second { height: 27px; padding-bottom: 5px; }
.dock-tools.second .drop { margin: 0 -3px 0 -5px; }
.browser-tree { height: 318px; flex: none; display: flex; border: 1px solid #b8b3ad; background: #fff; overflow: hidden; }
.tree { list-style: none; margin: 0; padding: 0; flex: 1; overflow: hidden; letter-spacing: .18px; }
.tree .loose { letter-spacing: .45px; }
.tree li { height: 19px; display: flex; align-items: center; white-space: nowrap; }
.tree li > i { width: 23px; height: 9px; }
.tree li > i.exp { background: #444; clip-path: polygon(7px 0, 12px 4.5px, 7px 9px); }
.tree li > i.exp.open { clip-path: polygon(5px 2px, 14px 2px, 9.5px 7px); }
.tree svg { width: 16px; height: 16px; margin-right: 6px; }
.tree .selected { width: 220px; background: #308cc6; color: #e8f3fa; padding-left: 43px; }
.tree .selected svg { color: #4b96cc; }
.blue { color: #6d9acb; }
.navy { color: #2d4866; }
.vscroll { width: 14px; flex: none; display: flex; flex-direction: column; border-left: 1px solid #b8b3ad; background: #f7f5f3; }
.vscroll b { display: flex; justify-content: center; align-items: center; }
.vscroll .up { height: 14px; border-bottom: 1px solid #b8b3ad; }
.vscroll .thumb { height: 31px; background: #e6e3df; border-bottom: 1px solid #b8b3ad; }
.vscroll .rest { flex: 1; }
.vscroll .down { height: 14px; border-top: 1px solid #b8b3ad; }
.up::after, .tri-up { content: ""; width: 8px; height: 4px; background: #555; clip-path: polygon(0 100%, 50% 0, 100% 100%); }
.down::after, .tri-down { content: ""; width: 8px; height: 4px; background: #555; clip-path: polygon(0 0, 100% 0, 50% 100%); }

.layer-tree { flex: 1; border: 1px solid #b8b3ad; background: #fff; display: flex; flex-direction: column; justify-content: space-between; overflow: hidden; }
.layer-row { height: 19px; display: flex; align-items: center; background: #308cc6; color: #fff; padding-left: 23px; white-space: nowrap; font: bold 14px/18px "Noto Sans", sans-serif; overflow: hidden; }
.layer-row span { text-decoration: underline; text-decoration-thickness: 1px; text-underline-offset: 3px; }
.check { width: 14px; height: 14px; background: #fff; border: 1px solid #aaa6a1; }
.check svg { width: 12px; height: 12px; }
.marker { width: 7px; height: 7px; border-radius: 50%; border: 1px solid #596172; background: #b36b60; margin: 0 10px 0 11px; }
.hscroll { height: 14px; display: flex; border-top: 1px solid #b8b3ad; background: linear-gradient(#fff, #efecea); }
.hscroll b { border-right: 1px solid #b8b3ad; display: flex; align-items: center; justify-content: center; }
.hscroll .left { width: 14px; }
.hscroll .track { flex: 1; }
.hscroll .thumb { width: 13px; background: #e3e0dc; }
.hscroll .right { width: 13px; border: 0; }
.left::after, .right::after { content: ""; width: 5px; height: 8px; background: #444; clip-path: polygon(100% 0, 100% 100%, 0 50%); }
.right::after { clip-path: polygon(0 0, 100% 50%, 0 100%); }
.splitter { width: 6px; flex: none; }
.map { flex: 1; border: 1px solid #b8b3ad; background: #fff; }
#points { width: 100%; height: 100%; }
#points circle { fill: #e77148; stroke: #363432; stroke-width: 1.1; }

.status { flex: 1; display: flex; align-items: center; padding-left: 4px; font-size: 12px; letter-spacing: -.2px; white-space: nowrap; }
.status > * { flex: none; }
.locator { width: 268px; height: 25px; display: flex; align-items: center; gap: 7px; padding-left: 7px; border: 1px solid #b0aba5; border-radius: 3px; background: #fff; color: #858585; font-size: 14px; letter-spacing: .4px; }
.locator svg { width: 14px; height: 14px; }
.message { width: 347px; padding-left: 8px; letter-spacing: -.23px; }
.coord-label { width: 64px; }
.field { height: 23px; border: 1px solid #b0aba5; border-radius: 3px; background: #fff; display: flex; align-items: center; justify-content: space-between; }
.coord { width: 138px; padding-left: 9px; letter-spacing: -.15px; }
.mouse { width: 16px; height: 16px; margin: 0 13px 0 4px; }
.scale-label { width: 32px; }
.combo { width: 97px; height: 25px; padding-left: 3px; }
.combo i { width: 21px; height: 100%; display: flex; align-items: center; justify-content: center; border-left: 1px solid #b0aba5; background: #f5f3f0; }
.lock { width: 14px; height: 16px; margin: 0 8px 0 11px; }
.mag-label { width: 56px; }
.spin i { width: 14px; height: 100%; display: flex; flex-direction: column; gap: 6px; align-items: center; justify-content: center; border-left: 1px solid #b0aba5; background: #f5f3f0; }
.mag { width: 98px; padding-left: 5px; }
.rot-label { width: 66px; padding-left: 9px; letter-spacing: 0; }
.rot { width: 94px; padding-left: 4px; margin-right: 6px; }
.render-label { width: 57px; padding-left: 5px; letter-spacing: -.1px; }
.crs { width: 14px; height: 14px; margin: 0 5px 0 6px; }
.epsg { width: 78px; }
.bubble { width: 16px; height: 16px; }

.context-menu { position: absolute; left: 83px; top: 385px; width: 200px; height: 125px; background: #fff; border: 1px solid #969992; letter-spacing: .34px; }
.context-menu div { height: 25px; line-height: 22px; padding: 0 0 2px 27px; display: flex; justify-content: space-between; align-items: center; }
.context-menu .active { height: 26px; margin: -1px 0 0; background: #308cc6; color: #e9f4fb; border: solid #246f9e; border-width: 1px 0; padding-bottom: 1px; }
.context-menu i { width: 5px; height: 10px; margin-right: 5px; background: #555; clip-path: polygon(0 0, 100% 50%, 0 100%); }
.cursor { position: absolute; left: 262px; top: 469px; width: 12px; height: 20px; }
```

FILE: points.js
```js
// Point features, grouped by canvas row: "y: x x x".
const rows = `
158: 484 702
165: 525
164: 576 600 628 677 737 763 787 813 838 864 896 989 1015 1040 1065 1092 1118 1143 1170 1248 1301 1326
181: 506 943
185: 698
187: 1285
188: 1254
189: 559 586 611 637 663 748 773 823 968 994 1018 1071 1096 1122 1149 1337
195: 920
197: 895
200: 488
205: 513
213: 618 672 745 771 849 944 993 1046 1071 1114 1142 1167 1222 1246 1271 1297
214: 566 592
220: 919
221: 533 720 873
230: 509 1091
233: 483
236: 1309
237: 942 1334
238: 739 766 791 894 967
245: 642 667
246: 540 591 869 918 1021 1046 1072 1128 1155 1182 1235 1260 1286
254: 1096
255: 1351
262: 746 772 800 954 978 1003
270: 568 595 620 646
278: 1055 1080 1105 1156 1181 1254 1306
279: 495
286: 740 767 893 992
287: 698 793 939 966
293: 588
295: 674
301: 1291
302: 510 1267
303: 536 1011 1035 1060 1086 1137 1165 1189 1216
311: 845 871 960 986 1323
312: 698
319: 582 608 633 749 775 800
327: 826 942 1065 1090 1114 1139 1166 1193 1279 1304
330: 918
335: 509 851 970 1216 1242 1330
337: 698
343: 805
344: 996
351: 1349
352: 527 552 577 603 628 654 944 1048 1073 1148 1288
360: 843 893 976 1325
361: 504
368: 673 795
374: 567
375: 593
376: 744 822 957 1033 1061 1115 1169 1279 1304
380: 486
384: 1328
389: 698
392: 671 723 844 869 893 1015
393: 803 989
400: 531 555 633 1117 1142 1166
401: 748 942 1038
402: 1286
408: 1323
409: 918 970 1236
410: 506
417: 651 722 794 819
425: 674 846 895 952 1003 1029 1080 1105 1129 1192 1217 1276
429: 488
433: 565 742 975 1327
435: 918 1352
448: 1262
449: 610 876 942
450: 762 851
457: 1027 1102 1190 1214
458: 497 551 577 698 1052 1078 1239 1317
461: 918
466: 630 723 781
474: 844 869 955 1297
481: 1323
482: 484 562 587 611 742 1004 1057 1134 1248
483: 1171 1197 1223
484: 698 1348
490: 776 825
498: 632 658 721 849 873
506: 526 969 1046 1097 1151 1202 1306
507: 1021 1177 1279
509: 698
514: 768 918
515: 575 601 740 792 817
523: 647 672 868 893 950
534: 698
537: 564
538: 592
539: 724 748 825 1019 1069 1120 1147 1197 1223 1248 1272 1298 1325
540: 512
543: 486
547: 963
560: 698
563: 501 605 671 729 780 806 858 884 944 1058 1108
564: 553 579 755 1032
565: 1352
567: 918
571: 1174
572: 1150 1199 1224
580: 963 1126
586: 698
588: 545 742 766 817 843 867 892 998 1025 1051 1293 1344
593: 918
594: 1262
596: 622 1224
597: 1198
604: 952 978
612: 510 641 667 803 829 854 880 1001
613: 536
619: 586 918
620: 1114 1138 1165 1192 1250
621: 1325
628: 942
629: 557
636: 528
637: 672 742 768 792 818 843 1027 1078
643: 1265 1290
644: 1239 1315
645: 577 603 918 1101 1187
646: 1162
647: 1341
653: 948 975
654: 722
658: 1138
661: 485 513 539 625 651 748 776 828 880 1000 1052 1079
662: 698
669: 1196 1227 1326
670: 565
677: 943
678: 669 726
684: 1138
686: 842 868 894 994 1019 1044 1070 1095
687: 524 698
694: 548 609 635 746 770
695: 918
702: 821 947 1226 1251 1276 1301 1326 1351
707: 483
709: 1138
710: 510 845 1025 1050 1075
713: 698
717: 601
718: 753 778 803
722: 918
727: 1260 1285 1338
734: 845 1033 1113 1139 1185 1210
735: 519 732 870 896 1009 1059
738: 494 699
742: 617
743: 643 668 783
748: 918
751: 1251 1275 1300 1325 1351
759: 1082 1108 1140 1190
764: 700
766: 601 625
767: 549 650 768 868 981 1007 1032 1056
775: 485 1237 1261
776: 1313 1339
783: 528 1185 1211
784: 1115
789: 700
791: 668
792: 504 644 726 763 813 892 958 982
799: 596 620 1072`;

const originX = 302;
const originY = 142;
const svg = document.getElementById("points");
for (const row of rows.trim().split("\n")) {
  const [y, xs] = row.split(":");
  for (const x of xs.trim().split(" ")) {
    const dot = document.createElementNS("http://www.w3.org/2000/svg", "circle");
    dot.setAttribute("cx", x - originX);
    dot.setAttribute("cy", y - originY);
    dot.setAttribute("r", 3.8);
    svg.append(dot);
  }
}
```
